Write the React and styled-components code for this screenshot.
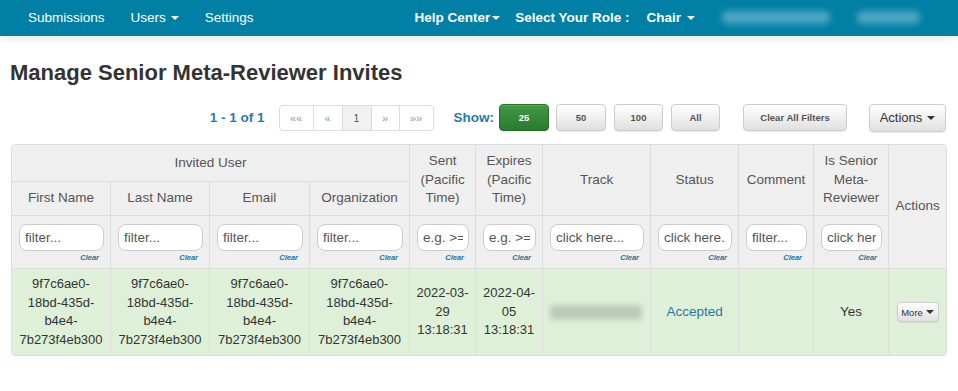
import React from 'react';
import styled, { createGlobalStyle, css } from 'styled-components';

const GlobalStyle = createGlobalStyle`
	* {
		box-sizing: border-box;
	}
	body {
		margin: 0;
		background: #fff;
		font-family: "Liberation Sans", Arial, sans-serif;
		color: #333;
	}
`;

const Navbar = styled.nav`
	height: 36px;
	background: #017fa5;
	display: flex;
	align-items: center;
	padding: 0 38px 1px 15px;
	color: #fff;
	font-size: 13.5px;
	box-shadow: 0 3px 8px rgba(0, 0, 0, 0.08);
`;

const NavItem = styled.span`
	display: flex;
	align-items: center;
	padding: ${({ $pad = 13 }) => `0 ${$pad}px`};
	margin-right: ${({ $mr = 0 }) => $mr}px;
	font-weight: ${({ $bold }) => ($bold ? 'bold' : 'normal')};
	white-space: nowrap;
`;

const RightGroup = styled.div`
	margin-left: auto;
	display: flex;
	align-items: center;
`;

const Caret = styled.span`
	display: inline-block;
	width: 0;
	height: 0;
	margin-left: ${({ $gap = 4 }) => $gap}px;
	border-top: 4px solid ${({ $color = 'currentColor' }) => $color};
	border-left: 4px solid transparent;
	border-right: 4px solid transparent;
`;

const Blurred = styled.span`
	display: inline-block;
	width: ${({ $w }) => $w}px;
	height: 13px;
	margin-right: ${({ $mr = 0 }) => $mr}px;
	background: rgba(150, 205, 222, 0.5);
	border-radius: 5px;
	filter: blur(3px);
`;

const Content = styled.main`
	padding: 0 11px 0 11px;
`;

const Title = styled.h1`
	margin: 25px 0 0 -1px;
	font-size: 22px;
	line-height: 24px;
	font-weight: bold;
	color: #333;
`;

const Toolbar = styled.div`
	margin-top: 19px;
	display: flex;
	align-items: center;
	justify-content: flex-end;
	height: 27px;
	padding-right: 1px;
`;

const Count = styled.span`
	font-size: 13.5px;
	font-weight: bold;
	color: #1d7eaa;
	margin-right: 14px;
`;

const Pager = styled.div`
	display: flex;
	height: 26px;
	border: 1px solid #ddd;
	border-radius: 4px;
	overflow: hidden;
	margin-right: 20px;
`;

const PageItem = styled.span`
	width: ${({ $w }) => $w}px;
	display: flex;
	align-items: center;
	justify-content: center;
	font-size: 11px;
	color: #7d9db5;
	border-left: 1px solid #ddd;

	&:first-child {
		border-left: 0;
	}

	${({ $active }) =>
		$active &&
		css`
			background: #f1f1f1;
			color: #555;
			font-size: 10.5px;
		`}
`;

const ShowLabel = styled.span`
	font-size: 13.5px;
	font-weight: bold;
	color: #1d7eaa;
	margin-right: 5px;
`;

const Button = styled.button`
	height: ${({ $h = 27 }) => $h}px;
	width: ${({ $w }) => $w}px;
	margin-right: ${({ $mr = 0 }) => $mr}px;
	padding: 0;
	display: inline-flex;
	align-items: center;
	justify-content: center;
	border: 1px solid #ccc;
	border-radius: 4px;
	background: linear-gradient(#fff, #e0e0e0);
	box-shadow: inset 0 1px 0 rgba(255, 255, 255, 0.15), 0 1px 1px rgba(0, 0, 0, 0.075);
	font-family: "Liberation Sans", Arial, sans-serif;
	font-size: ${({ $size = 9.5 }) => $size}px;
	font-weight: ${({ $bold = true }) => ($bold ? 'bold' : 'normal')};
	color: ${({ $bold = true }) => ($bold ? '#555' : '#333')};

	${({ $primary }) =>
		$primary &&
		css`
			background: linear-gradient(#419b44, #2b7a2e);
			border-color: #2a6e2c;
			color: #fff;
		`}
`;

const TableBox = styled.div`
	margin-top: 13px;
	border: 1px solid #ddd;
	border-radius: 4px;
	overflow: hidden;
	box-shadow: 0 1px 1px rgba(0, 0, 0, 0.05);
`;

const Table = styled.table`
	width: 100%;
	table-layout: fixed;
	border-collapse: separate;
	border-spacing: 0;
`;

const cellBase = css`
	border-right: ${({ $edge }) => ($edge ? '0' : '1px solid #ddd')};
	border-bottom: 1px solid #ddd;
	text-align: center;
	vertical-align: middle;
	line-height: 18.5px;
	padding: 0 4px;
`;

const Th = styled.th`
	${cellBase};
	background: #efefef;
	color: #555;
	font-weight: normal;
	font-size: 13.5px;
`;

const FilterTh = styled.th`
	${cellBase};
	background: #efefef;
	vertical-align: top;
	padding: 8px 6px 0 7px;
	font-weight: normal;
`;

const FilterInput = styled.input`
	display: block;
	width: 100%;
	height: 27px;
	border: 1px solid #ccc;
	border-radius: 8px;
	background: #fff;
	padding: 0 5px;
	font-family: "Liberation Sans", Arial, sans-serif;
	font-size: 13.5px;
	color: #555;
	outline: none;

	&::placeholder {
		color: #555;
	}
`;

const ClearLink = styled.div`
	text-align: right;
	padding-right: 5px;
	margin-top: 2px;
	font-size: 7.5px;
	line-height: 10px;
	font-weight: bold;
	font-style: italic;
	color: #22739c;
`;

const Td = styled.td`
	${cellBase};
	background: #dff0d8;
	font-size: 13px;
	color: #333;
	border-bottom: 0;
	padding: 0 3px;
`;

const CellText = styled.span`
	color: ${({ $link }) => ($link ? '#1f78a8' : '#333')};
	font-size: 13.5px;
`;

const TrackBlur = styled.div`
	height: 15px;
	margin: 0 5px 0 4px;
	background: #bccbb7;
	border-radius: 3px;
	filter: blur(2.5px);
`;

const Row = styled.tr`
	height: ${({ $h }) => $h}px;
`;

const colWidths = [99, 99, 100, 100, 66, 67, 108, 88, 75, 75, 57];

const filters = [
	'filter...',
	'filter...',
	'filter...',
	'filter...',
	'e.g. >=',
	'e.g. >=',
	'click here...',
	'click here...',
	'filter...',
	'click here...'
];

const uuid = ['9f7c6ae0-', '18bd-435d-', 'b4e4-', '7b273f4eb300'];

const Lines = ({ lines }) =>
	lines.map((line, i) => (
		<React.Fragment key={i}>
			{i > 0 && <br />}
			{line}
		</React.Fragment>
	));

const App = () => {
	return (
		<>
			<GlobalStyle />
			<Navbar>
				<NavItem>Submissions</NavItem>
				<NavItem>
					Users
					<Caret $gap={5} />
				</NavItem>
				<NavItem>Settings</NavItem>
				<RightGroup>
					<NavItem $pad={0} $mr={15} $bold>
						Help Center
						<Caret $gap={2} />
					</NavItem>
					<NavItem $pad={0} $mr={17} $bold>
						Select Your Role :
					</NavItem>
					<NavItem $pad={0} $mr={27} $bold>
						Chair
						<Caret $gap={6} />
					</NavItem>
					<Blurred $w={108} $mr={27} />
					<Blurred $w={63} />
				</RightGroup>
			</Navbar>

			<Content>
				<Title>Manage Senior Meta-Reviewer Invites</Title>

				<Toolbar>
					<Count>1 - 1 of 1</Count>
					<Pager>
						<PageItem $w={33}>««</PageItem>
						<PageItem $w={29}>«</PageItem>
						<PageItem $w={29} $active>1</PageItem>
						<PageItem $w={28}>»</PageItem>
						<PageItem $w={34}>»»</PageItem>
					</Pager>
					<ShowLabel>Show:</ShowLabel>
					<Button $w={50} $mr={7} $primary>25</Button>
					<Button $w={50} $mr={8}>50</Button>
					<Button $w={49} $mr={8}>100</Button>
					<Button $w={49} $mr={23}>All</Button>
					<Button $w={104} $mr={22}>Clear All Filters</Button>
					<Button $w={77} $h={28} $size={13} $bold={false}>
						Actions
						<Caret $gap={5} $color="#333" />
					</Button>
				</Toolbar>

				<TableBox>
					<Table>
						<colgroup>
							{colWidths.map((w, i) => (
								<col key={i} style={{ width: w }} />
							))}
						</colgroup>
						<thead>
							<Row $h={37}>
								<Th colSpan={4}>Invited User</Th>
								<Th rowSpan={2}>Sent (Pacific Time)</Th>
								<Th rowSpan={2}>Expires (Pacific Time)</Th>
								<Th rowSpan={2}>Track</Th>
								<Th rowSpan={2}>Status</Th>
								<Th rowSpan={2}>Comment</Th>
								<Th rowSpan={2}>Is Senior Meta-Reviewer</Th>
								<Th rowSpan={3} $edge>
									Actions
								</Th>
							</Row>
							<Row $h={34}>
								<Th>First Name</Th>
								<Th>Last Name</Th>
								<Th>Email</Th>
								<Th>Organization</Th>
							</Row>
							<Row $h={53}>
								{filters.map((p, i) => (
									<FilterTh key={i}>
										<FilterInput placeholder={p} readOnly />
										<ClearLink>Clear</ClearLink>
									</FilterTh>
								))}
							</Row>
						</thead>
						<tbody>
							<Row $h={86}>
								<Td><Lines lines={uuid} /></Td>
								<Td><Lines lines={uuid} /></Td>
								<Td><Lines lines={uuid} /></Td>
								<Td><Lines lines={uuid} /></Td>
								<Td><Lines lines={['2022-03-', '29', '13:18:31']} /></Td>
								<Td><Lines lines={['2022-04-', '05', '13:18:31']} /></Td>
								<Td><TrackBlur /></Td>
								<Td><CellText $link>Accepted</CellText></Td>
								<Td />
								<Td><CellText>Yes</CellText></Td>
								<Td $edge>
									<Button $w={42} $h={20} $size={9.5} $bold={false}>
										More
										<Caret $gap={3} $color="#333" />
									</Button>
								</Td>
							</Row>
						</tbody>
					</Table>
				</TableBox>
			</Content>
		</>
	);
};

export default App;
